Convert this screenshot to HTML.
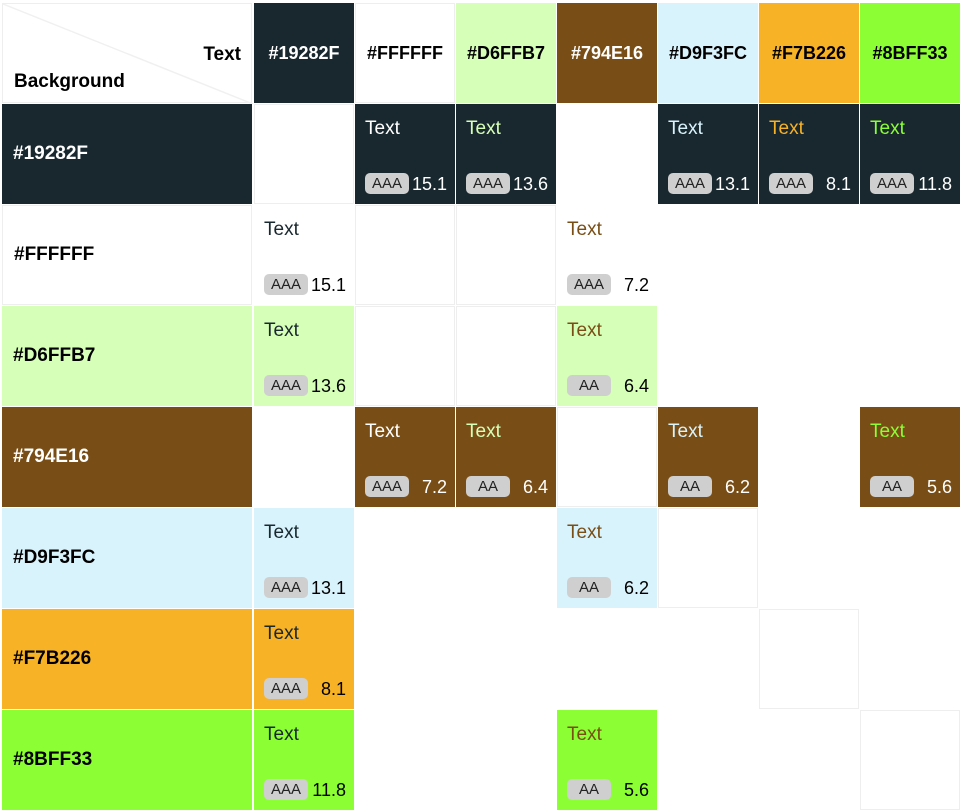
<!DOCTYPE html><html><head><style>
body{margin:0;width:963px;height:811px;background:#fff;position:relative;font-family:"Liberation Sans",sans-serif;overflow:hidden}
.c{position:absolute;box-sizing:border-box}
.h{font-weight:bold;font-size:18px;display:flex;align-items:center;justify-content:center}
.r{font-weight:bold;font-size:19px;display:flex;align-items:center;padding-left:11px}
.t{position:absolute;left:10px;top:14px;font-size:19px}
.b{position:absolute;left:10px;top:69px;width:44px;height:21px;border-radius:5px;background:#cfcfcf;color:#222;font-size:15px;text-align:center;line-height:22px}
.n{position:absolute;right:8px;top:69px;font-size:18px;line-height:22px}
.e{border:1px solid #eee}
</style></head><body>
<div class="c e" style="left:2px;top:3px;width:250px;height:100px">
<svg width="250" height="100" style="position:absolute;left:0;top:0"><line x1="0" y1="0" x2="250" y2="100" stroke="#f0f0f0" stroke-width="1.5"/></svg>
<div style="position:absolute;right:10px;top:40px;font-weight:bold;font-size:19px">Text</div>
<div style="position:absolute;left:11px;top:67px;font-weight:bold;font-size:19px">Background</div>
</div>
<div id="g"></div>
<script>
const C=["#19282F","#FFFFFF","#D6FFB7","#794E16","#D9F3FC","#F7B226","#8BFF33"];
const X=[254,355,456,557,658,759,860],Y=[104,205,306,407,508,609,710];
const P={"0,1":["AAA","15.1"],"0,2":["AAA","13.6"],"0,4":["AAA","13.1"],"0,5":["AAA","8.1"],"0,6":["AAA","11.8"],
"1,0":["AAA","15.1"],"1,3":["AAA","7.2"],"2,0":["AAA","13.6"],"2,3":["AA","6.4"],
"3,1":["AAA","7.2"],"3,2":["AA","6.4"],"3,4":["AA","6.2"],"3,6":["AA","5.6"],
"4,0":["AAA","13.1"],"4,3":["AA","6.2"],"5,0":["AAA","8.1"],"6,0":["AAA","11.8"],"6,3":["AA","5.6"]};
const dark=i=>i==0||i==3;
let h="";
C.forEach((c,j)=>{h+=`<div class="c h ${j==1?'e':''}" style="left:${X[j]}px;top:3px;width:100px;height:100px;background:${j==1?'#fff':c};color:${dark(j)?'#fff':'#000'}">${c}</div>`});
C.forEach((bg,i)=>{
h+=`<div class="c r ${i==1?'e':''}" style="left:2px;top:${Y[i]}px;width:250px;height:100px;background:${bg};color:${dark(i)?'#fff':'#000'}">${bg}</div>`;
C.forEach((fg,j)=>{
const p=P[i+","+j];
if(p){h+=`<div class="c" style="left:${X[j]}px;top:${Y[i]}px;width:100px;height:100px;background:${bg};color:${fg}"><div class="t">Text</div><div class="b">${p[0]}</div><div class="n" style="color:${dark(i)?'#fff':'#000'}">${p[1]}</div></div>`}
else if(i==j||(i==1&&j==2)||(i==2&&j==1)){h+=`<div class="c e" style="left:${X[j]}px;top:${Y[i]}px;width:100px;height:100px"></div>`}
});});
document.getElementById("g").innerHTML=h;
</script>
</body></html>
